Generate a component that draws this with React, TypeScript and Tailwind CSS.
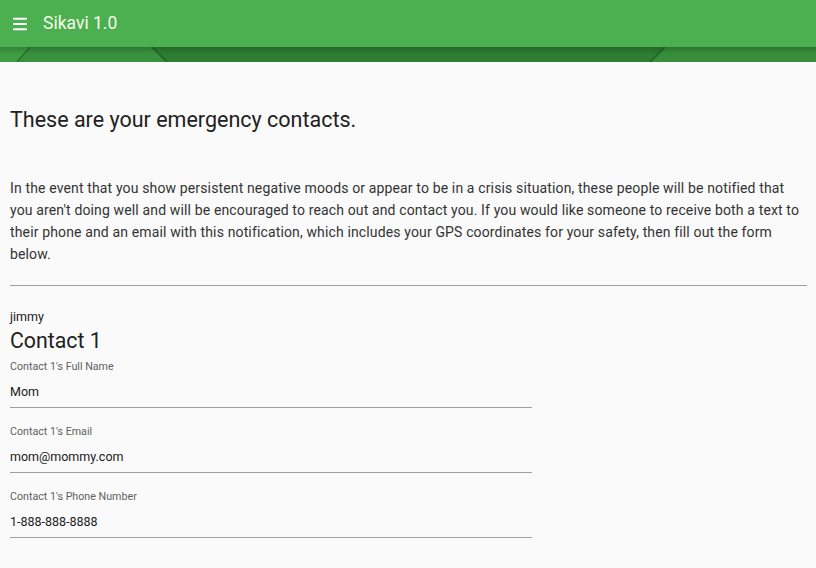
import { Menu } from 'lucide-react'

const fields = [
  { label: "Contact 1's Full Name", value: 'Mom' },
  { label: "Contact 1's Email", value: 'mom@mommy.com' },
  { label: "Contact 1's Phone Number", value: '1-888-888-8888' },
]

function Band() {
  return (
    <svg width="816" height="15" viewBox="0 0 816 15" className="block">
      <defs>
        <linearGradient id="shade" x1="0" y1="0" x2="0" y2="1">
          <stop offset="0" stopColor="#000" stopOpacity="0.18" />
          <stop offset="0.5" stopColor="#000" stopOpacity="0" />
        </linearGradient>
      </defs>
      <rect x="0" y="0" width="816" height="15" fill="#3f9e44" />
      <polygon points="30,0 152,0 167,15 17,15" fill="#3a9140" />
      <polygon points="152,0 665,0 650,15 167,15" fill="#2e7d32" />
      <polygon points="665,0 816,0 816,15 650,15" fill="#388e3c" />
      <line x1="30" y1="0" x2="17" y2="15" stroke="#2a6f2e" strokeWidth="1.5" />
      <line x1="152" y1="0" x2="167" y2="15" stroke="#24692a" strokeWidth="2" />
      <line x1="665" y1="0" x2="650" y2="15" stroke="#24692a" strokeWidth="2" />
      <rect x="0" y="0" width="816" height="15" fill="url(#shade)" />
    </svg>
  )
}

export default function App() {
  return (
    <div className="min-h-[568px] bg-[#fafafa] font-['Roboto',sans-serif]">
      <header className="bg-[#4caf50]">
        <div className="h-[47px] flex items-center pl-[11px] gap-[14px] text-white">
          <Menu size={18} strokeWidth={2.5} />
          <span className="text-[17.5px] text-[#f5fbea]">Sikavi 1.0</span>
        </div>
        <Band />
      </header>

      <main className="px-[10px] pr-[9px]">
        <h1 className="mt-[44px] text-[21.5px] leading-[28px] text-[#212121]">
          These are your emergency contacts.
        </h1>
        <p className="mt-[43px] text-[14px] leading-[22px] tracking-[0.14px] text-[#333]">
          In the event that you show persistent negative moods or appear to be in a crisis situation, these people will be
          notified that you aren't doing well and will be encouraged to reach out and contact you. If you would like someone
          to receive both a text to their phone and an email with this notification, which includes your GPS coordinates for
          your safety, then fill out the form below.
        </p>
        <hr className="mt-[20px] border-0 border-t border-[#9e9e9e]" />

        <div className="mt-[21px] text-[12.5px] leading-[20px] text-[#212121]">jimmy</div>
        <h2 className="text-[21.3px] leading-[28px] text-[#212121]">Contact 1</h2>

        <div className="w-[522px] flex flex-col gap-[16px] mt-[4px]">
          {fields.map((f) => (
            <label key={f.label} className="block">
              <div className="text-[10.7px] leading-[16px] text-[#616161]">{f.label}</div>
              <input
                readOnly
                value={f.value}
                className="mt-[7px] w-full bg-transparent outline-none text-[12.5px] leading-[20px] text-[#212121] pb-[5px] border-b border-[#9e9e9e]"
              />
            </label>
          ))}
        </div>
      </main>
    </div>
  )
}
